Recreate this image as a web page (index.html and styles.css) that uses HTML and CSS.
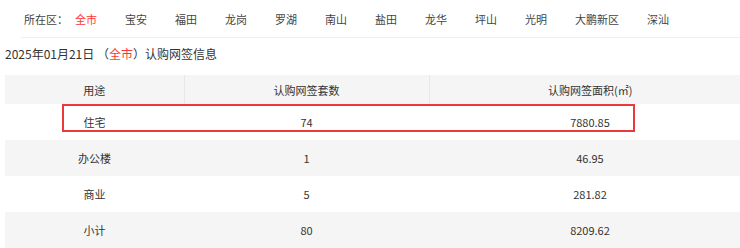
FILE: index.html
```html
<!DOCTYPE html>
<html lang="zh-CN">
<head>
<meta charset="utf-8">
<title>认购网签信息</title>
<link rel="stylesheet" href="styles.css">
</head>
<body>
<div class="page">
  <nav class="area">
    <span class="area-label">所在区：</span>
    <a class="area-item active">全市</a>
    <a class="area-item">宝安</a>
    <a class="area-item">福田</a>
    <a class="area-item">龙岗</a>
    <a class="area-item">罗湖</a>
    <a class="area-item">南山</a>
    <a class="area-item">盐田</a>
    <a class="area-item">龙华</a>
    <a class="area-item">坪山</a>
    <a class="area-item">光明</a>
    <a class="area-item">大鹏新区</a>
    <a class="area-item">深汕</a>
  </nav>
  <h2 class="title">2025年01月21日 （<span class="hl">全市</span>）认购网签信息</h2>
  <div class="table-wrap">
    <table class="data">
      <colgroup>
        <col class="c1"><col class="c2"><col class="c3">
      </colgroup>
      <thead>
        <tr><th>用途</th><th>认购网签套数</th><th>认购网签面积(㎡)</th></tr>
      </thead>
      <tbody>
        <tr><td>住宅</td><td>74</td><td>7880.85</td></tr>
        <tr><td>办公楼</td><td>1</td><td>46.95</td></tr>
        <tr><td>商业</td><td>5</td><td>281.82</td></tr>
        <tr><td>小计</td><td>80</td><td>8209.62</td></tr>
      </tbody>
    </table>
    <div class="mark"></div>
  </div>
</div>
</body>
</html>
```

FILE: styles.css
```css
html, body {
  margin: 0;
  padding: 0;
  background: #fff;
  overflow: hidden;
}
body {
  font-family: "Noto Sans CJK SC", "Noto Sans", sans-serif;
  color: #333;
}
.page {
  width: 760px;
}
.area {
  display: flex;
  align-items: center;
  height: 37px;
  margin-left: 21px;
  padding-left: 3px;
  border-bottom: 1px solid #efefef;
  font-size: 11px;
  color: #444;
}
.area-label {
  width: 51px;
}
.area-item {
  padding-right: 28px;
  color: #444;
  cursor: pointer;
}
.area-item.active {
  color: #f33;
}
.title {
  margin: 0;
  padding: 6px 0 11px 5px;
  line-height: 20px;
  font-size: 12px;
  font-weight: normal;
  color: #333;
}
.hl {
  color: #f33;
}
.table-wrap {
  position: relative;
  margin-left: 5px;
  width: 746px;
}
.data {
  width: 746px;
  border-collapse: collapse;
  table-layout: fixed;
  font-size: 11px;
  color: #333;
}
.c1 { width: 179px; }
.c2 { width: 245px; }
.c3 { width: 322px; }
.data th {
  height: 29px;
  padding: 0;
  background: #f5f5f5;
  font-weight: normal;
  text-align: center;
  border-left: 1px solid #e8e8e8;
}
.data th:first-child {
  border-left: none;
}
.data td {
  height: 36px;
  padding: 0;
  text-align: center;
}
.data tbody tr:nth-child(even) td {
  background: #f5f5f5;
}
.mark {
  position: absolute;
  left: 57px;
  top: 29px;
  width: 573px;
  height: 28px;
  box-sizing: border-box;
  border: 2px solid #ea3a3e;
  pointer-events: none;
}
```
